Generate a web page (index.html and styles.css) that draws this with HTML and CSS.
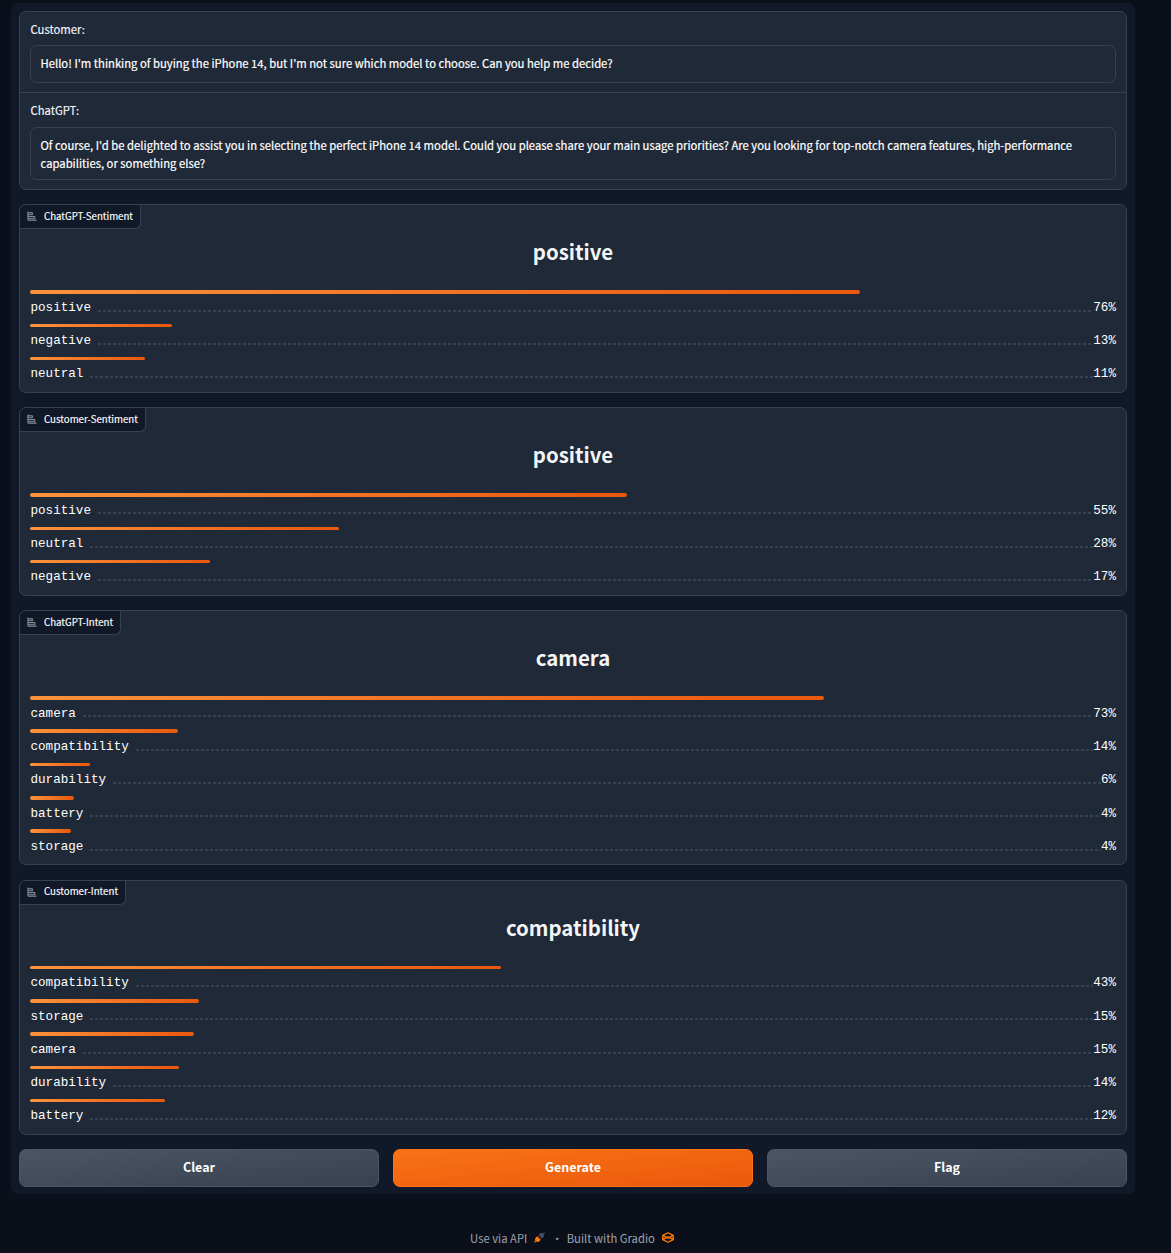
FILE: index.html
```html
<!DOCTYPE html>
<html lang="en">
<head>
<meta charset="utf-8">
<title>Sentiment and intent</title>
<link rel="stylesheet" href="styles.css">
</head>
<body>
<svg class="defs" width="0" height="0" aria-hidden="true">
  <symbol id="chart" viewBox="0 0 32 32"><path fill="currentColor" stroke="currentColor" stroke-width=".8" d="M4 2H2v26a2 2 0 0 0 2 2h26v-2H4v-3h22v-8H4v-4h14V5H4Zm20 17v4H4v-4ZM16 7v4H4V7Z"/></symbol>
</svg>
<main class="panel">
  <section class="form">
    <div class="field">
      <label class="field-label">Customer:</label>
      <div class="input">Hello! I'm thinking of buying the iPhone 14, but I'm not sure which model to choose. Can you help me decide?</div>
    </div>
    <div class="field field-reply">
      <label class="field-label">ChatGPT:</label>
      <div class="input input-tall">Of course, I'd be delighted to assist you in selecting the perfect iPhone 14 model. Could you please share your main usage priorities? Are you looking for top-notch camera features, high-performance<br>capabilities, or something else?</div>
    </div>
  </section>

  <section class="card">
    <div class="tag"><svg class="tag-icon"><use href="#chart"/></svg><span class="tag-text">ChatGPT-Sentiment</span></div>
    <h2 class="title">positive</h2>
    <div class="row"><div class="bar" style="width:76.43%"></div><div class="line"><span>positive</span><i class="dots"></i><span>76%</span></div></div>
    <div class="row"><div class="bar" style="width:13.08%"></div><div class="line"><span>negative</span><i class="dots"></i><span>13%</span></div></div>
    <div class="row"><div class="bar" style="width:10.59%"></div><div class="line"><span>neutral</span><i class="dots"></i><span>11%</span></div></div>
  </section>

  <section class="card">
    <div class="tag"><svg class="tag-icon"><use href="#chart"/></svg><span class="tag-text">Customer-Sentiment</span></div>
    <h2 class="title">positive</h2>
    <div class="row"><div class="bar" style="width:54.97%"></div><div class="line"><span>positive</span><i class="dots"></i><span>55%</span></div></div>
    <div class="row"><div class="bar" style="width:28.45%"></div><div class="line"><span>neutral</span><i class="dots"></i><span>28%</span></div></div>
    <div class="row"><div class="bar" style="width:16.57%"></div><div class="line"><span>negative</span><i class="dots"></i><span>17%</span></div></div>
  </section>

  <section class="card">
    <div class="tag"><svg class="tag-icon"><use href="#chart"/></svg><span class="tag-text">ChatGPT-Intent</span></div>
    <h2 class="title">camera</h2>
    <div class="row"><div class="bar" style="width:73.11%"></div><div class="line"><span>camera</span><i class="dots"></i><span>73%</span></div></div>
    <div class="row"><div class="bar" style="width:13.63%"></div><div class="line"><span>compatibility</span><i class="dots"></i><span>14%</span></div></div>
    <div class="row"><div class="bar" style="width:5.52%"></div><div class="line"><span>durability</span><i class="dots"></i><span>6%</span></div></div>
    <div class="row"><div class="bar" style="width:4.05%"></div><div class="line"><span>battery</span><i class="dots"></i><span>4%</span></div></div>
    <div class="row"><div class="bar" style="width:3.78%"></div><div class="line"><span>storage</span><i class="dots"></i><span>4%</span></div></div>
  </section>

  <section class="card">
    <div class="tag"><svg class="tag-icon"><use href="#chart"/></svg><span class="tag-text">Customer-Intent</span></div>
    <h2 class="title">compatibility</h2>
    <div class="row"><div class="bar" style="width:43.37%"></div><div class="line"><span>compatibility</span><i class="dots"></i><span>43%</span></div></div>
    <div class="row"><div class="bar" style="width:15.56%"></div><div class="line"><span>storage</span><i class="dots"></i><span>15%</span></div></div>
    <div class="row"><div class="bar" style="width:15.1%"></div><div class="line"><span>camera</span><i class="dots"></i><span>15%</span></div></div>
    <div class="row"><div class="bar" style="width:13.72%"></div><div class="line"><span>durability</span><i class="dots"></i><span>14%</span></div></div>
    <div class="row"><div class="bar" style="width:12.43%"></div><div class="line"><span>battery</span><i class="dots"></i><span>12%</span></div></div>
  </section>

  <div class="buttons">
    <button class="btn">Clear</button>
    <button class="btn btn-primary">Generate</button>
    <button class="btn">Flag</button>
  </div>
</main>
<footer class="footer">
  <span>Use via API</span>
  <svg class="plug" viewBox="0 0 28 28"><path fill="#475066" d="M26.94 2.94c.52-.52.52-1.36 0-1.88s-1.36-.52-1.88 0l-2.49 2.48c-1.45-.95-3.03-1.11-4.4-.9-1.62.25-3.06 1.03-3.78 1.75l-2 2a1.33 1.33 0 0 0 0 1.89l7.33 7.33c.52.52 1.37.52 1.89 0l2-2c.72-.72 1.5-2.16 1.75-3.78.21-1.37.05-2.95-.9-4.4Z"/><path fill="#ff7c00" d="M12.28 12.94c.52-.52.52-1.36 0-1.88s-1.37-.52-1.89 0l-1.72 1.72-.39-.39a1.33 1.33 0 0 0-1.89 0l-2 2c-.72.72-1.5 2.16-1.75 3.78-.2 1.37-.05 2.95.9 4.4l-2.48 2.49a1.33 1.33 0 0 0 1.88 1.88l2.49-2.48c1.45.95 3.03 1.1 4.4.9 1.62-.25 3.06-1.03 3.78-1.75l2-2c.52-.52.52-1.37 0-1.89l-.39-.39 1.72-1.72a1.33 1.33 0 0 0-1.88-1.89l-1.73 1.73-2.78-2.78Z"/></svg>
  <span class="sep">·</span>
  <span>Built with Gradio</span>
  <svg class="logo" viewBox="0 0 24 22" fill="none" stroke="#ff7c00" stroke-width="2.6" stroke-linejoin="round"><path d="M12 1.5 22.5 6.8 12 12.2 1.5 6.8Z"/><path d="M1.5 6.8v8.4L12 20.5l10.5-5.3V6.8M1.5 15.2 12 9.8l10.5 5.4"/></svg>
</footer>
</body>
</html>
```
FILE: styles.css
```css
* { box-sizing: border-box; }
body {
  margin: 0;
  height: 1253px;
  overflow: hidden;
  padding: 3.2px 36px 0 11px;
  background: #0b0f19;
  color: #f3f4f6;
  font-family: "Noto Sans CJK SC", "Open Sans", sans-serif;
  font-size: 11.29px;
}
.defs { display: block; height: 0; }
.panel {
  display: flex;
  flex-direction: column;
  gap: 14.4px;
  padding: 8px 8px 7.2px;
  border-radius: 7px;
  background: #111827;
}
.form {
  height: 178.7px;
  border: 1px solid #374151;
  border-radius: 7px;
  background: #1f2937;
}
.field { height: 80px; padding: 8px 10px 0; }
.field-reply { height: 96px; border-top: 1px solid #374151; }
.field-label {
  display: block;
  height: 25px;
  padding-left: 0.5px;
  line-height: 18px;
  -webkit-text-stroke: 0.15px;
}
.field-reply .field-label { height: 26px; }
.input {
  height: 38px;
  padding: 8px 9.5px;
  border: 1px solid #374151;
  border-radius: 7px;
  color: #fff;
  line-height: 18px;
  white-space: nowrap;
  -webkit-text-stroke: 0.2px;
}
.input-tall { height: 53px; }
.card {
  padding: 0 10px 1.61px;
  border: 1px solid #374151;
  border-radius: 7px;
  background: #1f2937;
}
.tag {
  display: flex;
  align-items: center;
  gap: 7px;
  width: max-content;
  height: 24px;
  margin-left: -10px;
  padding: 0 7px;
  border: solid #374151;
  border-width: 0 1px 1px 0;
  border-radius: 6px 0 6px 0;
  background: #111827;
  color: #fff;
  font-size: 9.7px;
}
.tag-icon { width: 10px; height: 10px; margin-bottom: 1px; color: #9ca3af; }
.tag-text { line-height: 14px; padding-bottom: 1.4px; -webkit-text-stroke: 0.15px; }
.title {
  height: 61.04px;
  margin: 0;
  line-height: 44px;
  text-align: center;
  font-size: 20.4px;
  font-weight: 600;
}
.row { height: 33.3px; }
.bar {
  height: 3.6px;
  border-radius: 2px;
  background: linear-gradient(to right, #fb923c, #ea580c);
}
.line {
  display: flex;
  height: 24px;
  padding-left: 0.5px;
  line-height: 29px;
  font-family: "Liberation Mono", monospace;
  font-size: 12.6px;
  color: #fff;
}
.dots {
  flex: 1;
  height: 2px;
  margin: 15.68px 0 0 7px;
  background: repeating-linear-gradient(to right, #374151 0 3px, transparent 3px 5px);
}
.buttons { display: grid; grid-template-columns: repeat(3, 1fr); gap: 14px; }
.btn {
  height: 37.8px;
  padding: 0 0 3px;
  border: 1px solid #4b5563;
  border-radius: 7px;
  background: linear-gradient(to bottom right, #4b5563, #374151);
  color: #fff;
  font-family: inherit;
  font-size: 12.5px;
  font-weight: 600;
}
.btn-primary { border-color: #f97316; background: linear-gradient(to bottom right, #f97316, #ea580c); }
.footer {
  display: flex;
  justify-content: center;
  align-items: center;
  height: 18px;
  margin-top: 34.5px;
  padding-right: 2px;
  color: #9ca3af;
}
.plug { width: 11px; height: 11px; margin-left: 7px; }
.sep { margin: 0 4px 0 6px; }
.logo { width: 12px; height: 11px; margin-left: 7px; }
```
